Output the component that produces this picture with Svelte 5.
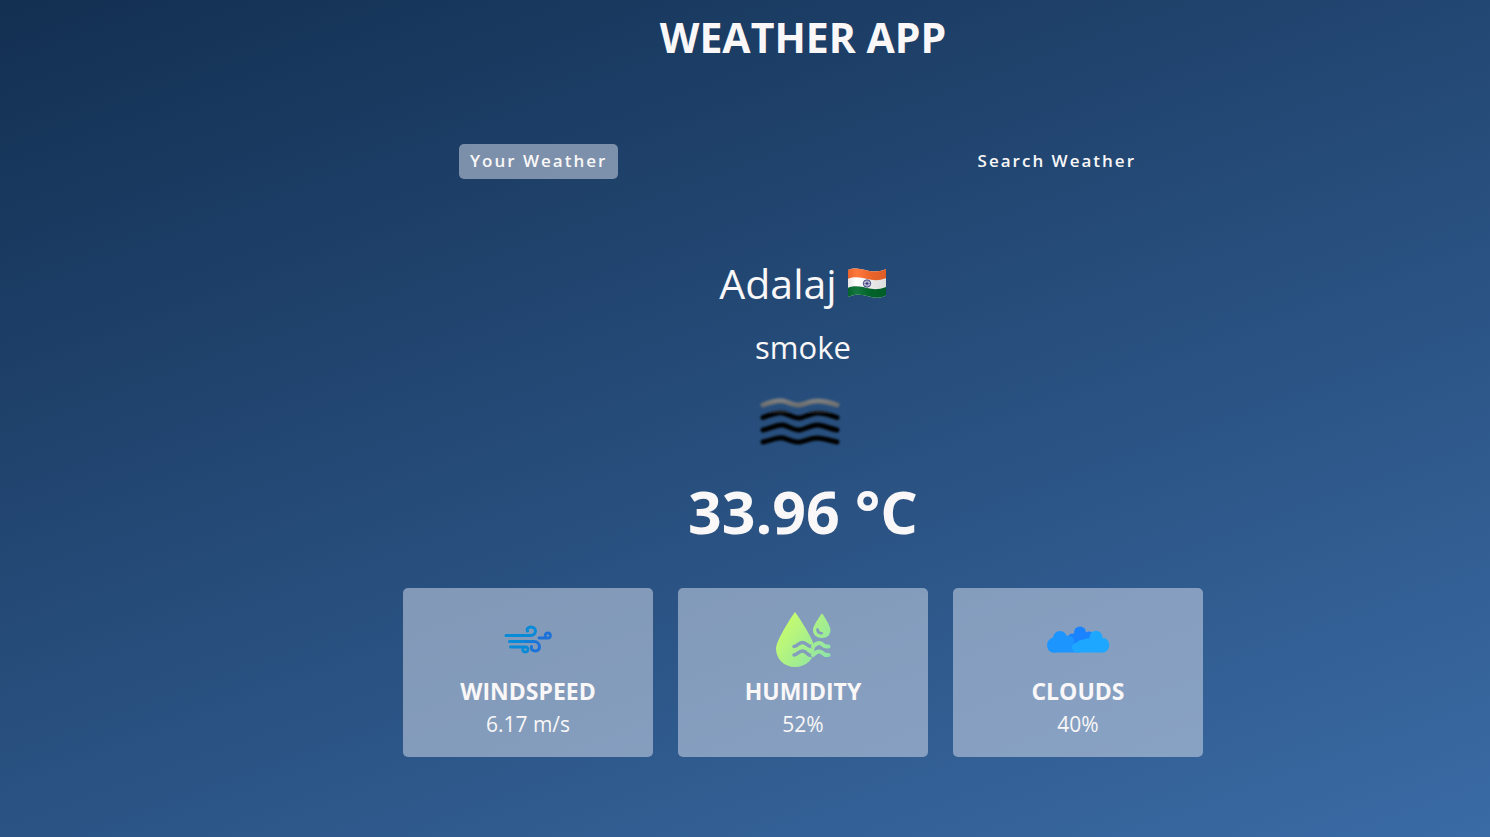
<script>
  let tab = $state('your');
  const weather = { city: 'Adalaj', description: 'smoke', temp: '33.96 °C' };
  const stats = [
    { icon: 'wind', label: 'WINDSPEED', value: '6.17 m/s' },
    { icon: 'humidity', label: 'HUMIDITY', value: '52%' },
    { icon: 'clouds', label: 'CLOUDS', value: '40%' }
  ];
</script>

<div class="wrapper">
  <h1>WEATHER APP</h1>

  <nav class="tabs">
    <button class:current={tab === 'your'} onclick={() => (tab = 'your')}>Your Weather</button>
    <button class:current={tab === 'search'} onclick={() => (tab = 'search')}>Search Weather</button>
  </nav>

  <main>
    <div class="name">
      <p>{weather.city}</p>
      <svg width="40" height="30" viewBox="0 0 40 30" role="img" aria-label="India">
        <defs>
          <clipPath id="flag"><path d="M1 2C8-1 14 1 20 2.500S32 4 39 1V27.500C32 31 26 29.500 20 28S8 26 1 29Z" /></clipPath>
          <linearGradient id="shade" x1="0" x2="1" y1="0" y2="0">
            <stop offset="0" stop-color="#000" stop-opacity=".12" />
            <stop offset=".25" stop-color="#fff" stop-opacity=".08" />
            <stop offset=".6" stop-color="#000" stop-opacity=".08" />
            <stop offset="1" stop-color="#000" stop-opacity=".14" />
          </linearGradient>
        </defs>
        <g clip-path="url(#flag)">
          <path fill="#fff" d="M0 0h40v30H0z" />
          <path fill="#ff6c2d" d="M0 0h40v10C32 13 26 12.500 20 11S8 8 0 11Z" />
          <path fill="#006b2d" d="M0 20C8 17 14 18.500 20 20S32 22 40 18.500V30H0Z" />
          <path fill="url(#shade)" d="M0 0h40v30H0z" />
        </g>
        <circle cx="20" cy="15.500" r="3.700" fill="#d5d5e8" stroke="#343477" stroke-width=".9" />
        <path stroke="#343477" stroke-width=".5" d="M20 12v7M16.500 15.500h7M17.500 13l5 5M22.500 13l-5 5" />
        <circle cx="20" cy="15.500" r="1.100" fill="#343477" />
      </svg>
    </div>
    <p class="description">{weather.description}</p>

    <svg class="smoke" width="88" height="54" viewBox="0 0 88 54" fill="none" stroke-width="5" stroke-linecap="round" stroke-linejoin="round" aria-hidden="true">
      <defs>
        <filter id="soft" filterUnits="userSpaceOnUse" x="0" y="0" width="88" height="54"><feGaussianBlur stdDeviation=".8" /></filter>
        <linearGradient id="top" gradientUnits="userSpaceOnUse" x1="0" x2="0" y1="3" y2="12">
          <stop stop-color="#858585" /><stop offset="1" stop-color="#6a6b6c" />
        </linearGradient>
        <linearGradient id="second" gradientUnits="userSpaceOnUse" x1="0" x2="0" y1="14" y2="20">
          <stop stop-color="#3c3c3c" /><stop offset="1" stop-color="#000" />
        </linearGradient>
      </defs>
      <g filter="url(#soft)">
        <path stroke="url(#top)" d="M7 10C16 7 22 5 27 6S39 11 44 10S56 6 61 6S72 7 81 10" />
        <path stroke="url(#second)" d="M7 22.500C16 19 22 17 27 18S39 24 44 23S56 18 61 18S72 19 81 22.500" />
        <path stroke="#000" d="M7 35C16 33 22 29 27 30S39 36 44 35S56 30 61 30S72 33 81 35" />
        <path stroke="#000" d="M7 47C16 45 22 42 27 43S39 48 44 47S56 43 61 43S72 45 81 47" />
      </g>
    </svg>

    <p class="temp">{weather.temp}</p>

    <div class="cards">
      {#each stats as stat}
        <section class="card">
          {#if stat.icon === 'wind'}
            <svg width="64" height="64" viewBox="0 0 64 64" fill="none" stroke-width="3" stroke-linecap="round" aria-hidden="true">
              <defs>
                <linearGradient id="wind" gradientUnits="userSpaceOnUse" x1="26" x2="42" y1="26" y2="32">
                  <stop stop-color="#078ad8" /><stop offset="1" stop-color="#1c72d8" />
                </linearGradient>
              </defs>
              <path stroke="#078ad8" d="M10 27.500H34.500C41 27.500 41 19 35 19C32 19 30.500 21 31.500 23" />
              <path stroke="url(#wind)" d="M13.500 33.500H38C45 33.500 45 43 39.500 43C36 43 34.500 40.500 35.500 38.500" />
              <path stroke="#078ad8" stroke-width="2.800" d="M14.500 39H29.500C33 39 32.500 44 29.500 44C27 44 26 42.500 27 41" />
              <path stroke="#1c72d8" stroke-width="2.800" d="M43 30H52C55.500 30 55 25 52 25C49 25 48.500 27.500 50 29" />
            </svg>
          {:else if stat.icon === 'humidity'}
            <svg width="64" height="64" viewBox="0 0 64 64" aria-hidden="true">
              <defs>
                <linearGradient id="drop" gradientUnits="userSpaceOnUse" x1="14" x2="57" y1="16" y2="48">
                  <stop stop-color="#c4fa70" /><stop offset="1" stop-color="#8de5a5" />
                </linearGradient>
                <mask id="cut">
                  <path fill="#fff" d="M0 0h64v64H0z" />
                  <path fill="none" stroke="#000" stroke-width="3.500" stroke-linecap="round" d="M23 38.500C27 38.500 27 34.500 31.500 34.500S36 39 40.500 38.500S43 37 45 36M23 47C27 47 27 43 31.500 43S36 48 40 47.500S43 46 45 45" />
                </mask>
              </defs>
              <path fill="url(#drop)" mask="url(#cut)" d="M24 4C26 6.500 43.500 32 43.500 40.500C43.500 51 35 59 24 59S5 51 5 40.500C5 32 22 6.500 24 4Z" />
              <path fill="url(#drop)" fill-rule="evenodd" d="M51 5.500C52 6.500 59.500 17.500 59.500 22C59.500 27 56 30 51 30S42 27 42 22C42 17.500 50 6.500 51 5.500ZM46.500 20C44 20 45 27 50.500 26.500C53 26.300 52.500 24 50.500 24C47.500 24 48.500 20 46.500 20Z" />
              <path fill="none" stroke="url(#drop)" stroke-width="4" stroke-linecap="round" d="M42 38.500C45 35.500 48.500 33.500 51.500 36.500S56 38.500 57.500 38.500M42 47C45 44 48.500 42 51.500 45S56 47 57.500 47" />
            </svg>
          {:else}
            <svg width="64" height="64" viewBox="0 0 64 64" aria-hidden="true">
              <g fill="#1a83ff">
                <circle cx="34" cy="24.500" r="6" /><circle cx="43" cy="27.500" r="4" /><circle cx="26.500" cy="30" r="4.500" />
                <path d="M24 27H46V43H24Z" />
              </g>
              <g fill="#1d95ff">
                <circle cx="8.500" cy="37" r="7.500" /><circle cx="14" cy="30" r="7" /><circle cx="22.500" cy="33" r="5.500" />
                <path d="M8 31H27V39H34V44.500H6Q3 44 2 41Z" />
              </g>
              <g fill="#1ea7ff">
                <circle cx="50" cy="29" r="6.300" /><circle cx="56" cy="37" r="7.300" /><circle cx="36" cy="38" r="6.200" /><circle cx="31" cy="39.500" r="5" />
                <path d="M36 32Q41 30 45 30H56L62 41Q60 44.500 57 44.500H31Z" />
              </g>
            </svg>
          {/if}
          <h2>{stat.label}</h2>
          <p>{stat.value}</p>
        </section>
      {/each}
    </div>
  </main>
</div>

<style>
  :global(*) { box-sizing: border-box; margin: 0; }
  .wrapper {
    min-height: 100vh;
    padding: 12px 0 80px 116px;
    display: flex;
    flex-direction: column;
    align-items: center;
    color: #f9f7f7;
    background: linear-gradient(160deg, #112d4e -4%, #3f72af 112%);
    font-family: "Open Sans", "Noto Sans", sans-serif;
  }
  h1 { font-size: 41px; line-height: 50px; font-weight: 700; }
  .tabs {
    width: 100%;
    max-width: 688px;
    margin-top: 82px;
    display: flex;
    justify-content: space-between;
  }
  button {
    height: 35px;
    padding: 0 11px 2px;
    border: 0;
    border-radius: 5px;
    background: transparent;
    color: inherit;
    font: 600 17px/32px "Open Sans", "Noto Sans", sans-serif;
    letter-spacing: 2px;
    cursor: pointer;
  }
  .current { background: rgba(219, 226, 239, 0.5); }
  main {
    width: 100%;
    display: flex;
    flex-direction: column;
    align-items: center;
    margin-top: 78px;
  }
  .name { display: flex; align-items: center; gap: 10px; }
  .name p { font-size: 41px; line-height: 52px; }
  .description { margin-top: 18px; font-size: 31px; line-height: 40px; }
  .smoke { margin: 28px 6px 0 0; }
  .temp { margin: 26px 0 41px; font-size: 59px; line-height: 72px; font-weight: 700; }
  .cards {
    width: 100%;
    max-width: 800px;
    display: grid;
    grid-template-columns: repeat(3, 1fr);
    gap: 25px;
  }
  .card {
    padding: 20px 16px 16px;
    display: flex;
    flex-direction: column;
    align-items: center;
    border-radius: 5px;
    background: rgba(219, 226, 239, 0.5);
  }
  h2 { margin-top: 3px; font-size: 23px; line-height: 32px; font-weight: 700; }
  .card p { font-size: 21px; line-height: 34px; }
</style>
